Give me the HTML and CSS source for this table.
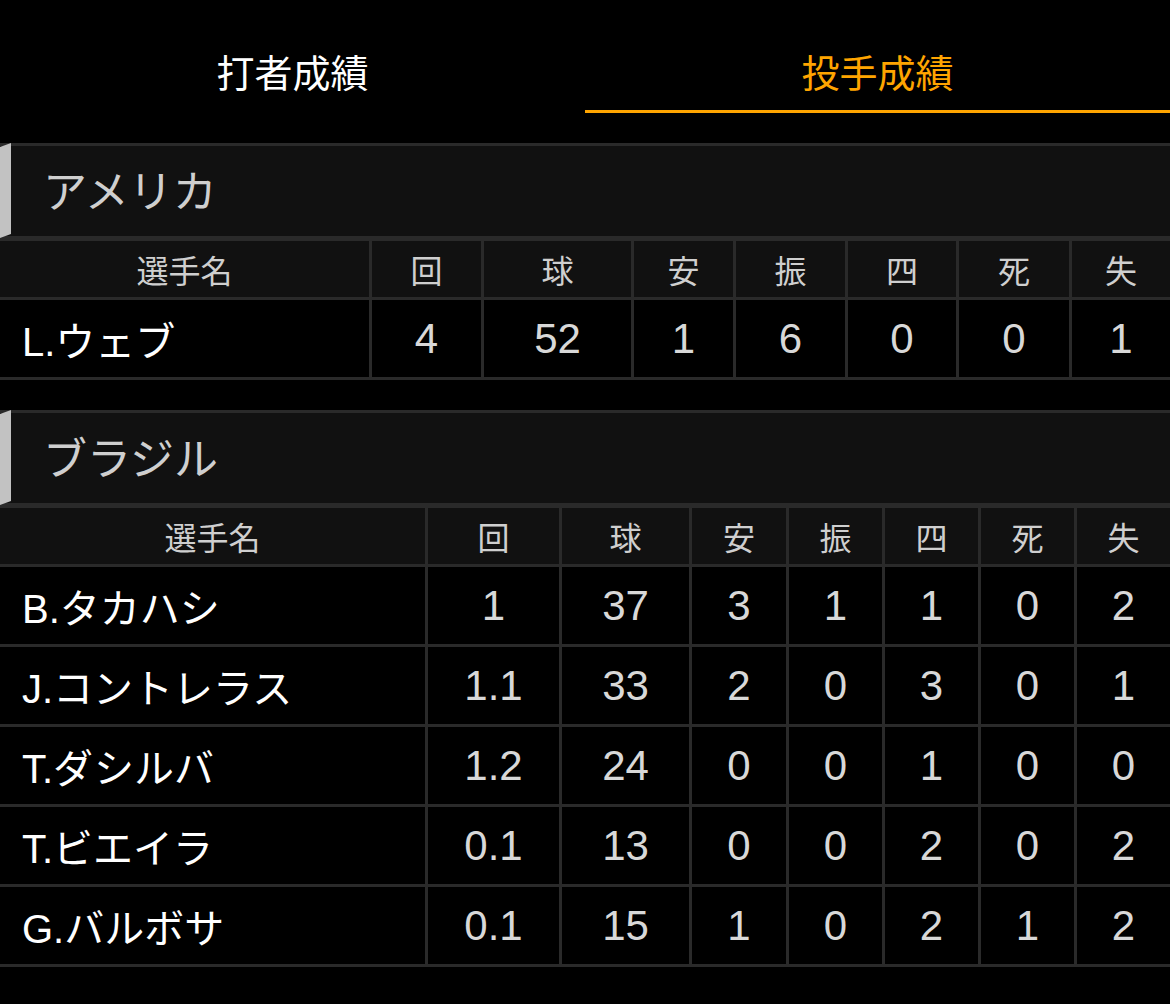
FILE: index.html
```html
<!DOCTYPE html>
<html lang="ja">
<head>
<meta charset="utf-8">
<title>投手成績</title>
<link rel="stylesheet" href="styles.css">
</head>
<body>
<nav class="tabs">
  <div class="tab">打者成績</div>
  <div class="tab tab-active">投手成績</div>
</nav>

<section class="team">
  <div class="team-head">アメリカ</div>
  <div class="grid grid-a">
    <div class="hc">選手名</div><div class="hc">回</div><div class="hc">球</div><div class="hc">安</div><div class="hc">振</div><div class="hc">四</div><div class="hc">死</div><div class="hc">失</div>
    <div class="dc name">L.ウェブ</div><div class="dc">4</div><div class="dc">52</div><div class="dc">1</div><div class="dc">6</div><div class="dc">0</div><div class="dc">0</div><div class="dc">1</div>
  </div>
</section>

<section class="team">
  <div class="team-head">ブラジル</div>
  <div class="grid grid-b">
    <div class="hc">選手名</div><div class="hc">回</div><div class="hc">球</div><div class="hc">安</div><div class="hc">振</div><div class="hc">四</div><div class="hc">死</div><div class="hc">失</div>
    <div class="dc name">B.タカハシ</div><div class="dc">1</div><div class="dc">37</div><div class="dc">3</div><div class="dc">1</div><div class="dc">1</div><div class="dc">0</div><div class="dc">2</div>
    <div class="dc name">J.コントレラス</div><div class="dc">1.1</div><div class="dc">33</div><div class="dc">2</div><div class="dc">0</div><div class="dc">3</div><div class="dc">0</div><div class="dc">1</div>
    <div class="dc name">T.ダシルバ</div><div class="dc">1.2</div><div class="dc">24</div><div class="dc">0</div><div class="dc">0</div><div class="dc">1</div><div class="dc">0</div><div class="dc">0</div>
    <div class="dc name">T.ビエイラ</div><div class="dc">0.1</div><div class="dc">13</div><div class="dc">0</div><div class="dc">0</div><div class="dc">2</div><div class="dc">0</div><div class="dc">2</div>
    <div class="dc name">G.バルボサ</div><div class="dc">0.1</div><div class="dc">15</div><div class="dc">1</div><div class="dc">0</div><div class="dc">2</div><div class="dc">1</div><div class="dc">2</div>
  </div>
</section>
</body>
</html>
```

FILE: styles.css
```css
html, body {
  margin: 0;
  padding: 0;
  background: #000;
}

body {
  font-family: "Liberation Sans", "Noto Sans CJK JP", sans-serif;
  color: #fff;
}

.tabs {
  display: flex;
}

.tab {
  flex: 1 1 0;
  height: 79px;
  padding-top: 31px;
  border-bottom: 3px solid transparent;
  display: flex;
  align-items: center;
  justify-content: center;
  font-family: "Noto Sans CJK JP", sans-serif;
  font-size: 38px;
  color: #fff;
}

.tab-active {
  color: #ffa500;
  border-bottom-color: #ffa500;
}

.team {
  margin-top: 30px;
}

.team-head {
  position: relative;
  height: 86px;
  padding-bottom: 4px;
  border-top: 3px solid #2a2a2a;
  border-bottom: 2px solid #2a2a2a;
  background: #111;
  display: flex;
  align-items: center;
  padding-left: 43px;
  font-family: "Noto Sans CJK JP", sans-serif;
  font-size: 44px;
  color: #cfcfcf;
}

.team-head::before {
  content: "";
  position: absolute;
  left: 0;
  top: -3px;
  bottom: -2px;
  width: 11px;
  background: #c2c2c2;
  clip-path: polygon(0 4px, 100% 0, 100% calc(100% - 4px), 0 100%);
}

.grid {
  display: grid;
  gap: 3px;
  padding: 3px 0;
  background: #2a2a2a;
}

.grid-a {
  grid-template-columns: 369px 109px 147px 99px 109px 108px 110px 1fr;
}

.grid-b {
  grid-template-columns: 425px 131px 127px 94px 93px 93px 93px 1fr;
}

.hc {
  height: 56px;
  background: #111;
  display: flex;
  align-items: center;
  justify-content: center;
  font-family: "Noto Sans CJK JP", sans-serif;
  font-size: 32px;
  color: #cfcfcf;
}

.dc {
  height: 77px;
  background: #000;
  display: flex;
  align-items: center;
  justify-content: center;
  font-size: 42px;
  color: #d8d8d8;
}

.dc.name {
  justify-content: flex-start;
  padding-left: 22px;
  font-size: 40px;
  color: #fff;
}
```
